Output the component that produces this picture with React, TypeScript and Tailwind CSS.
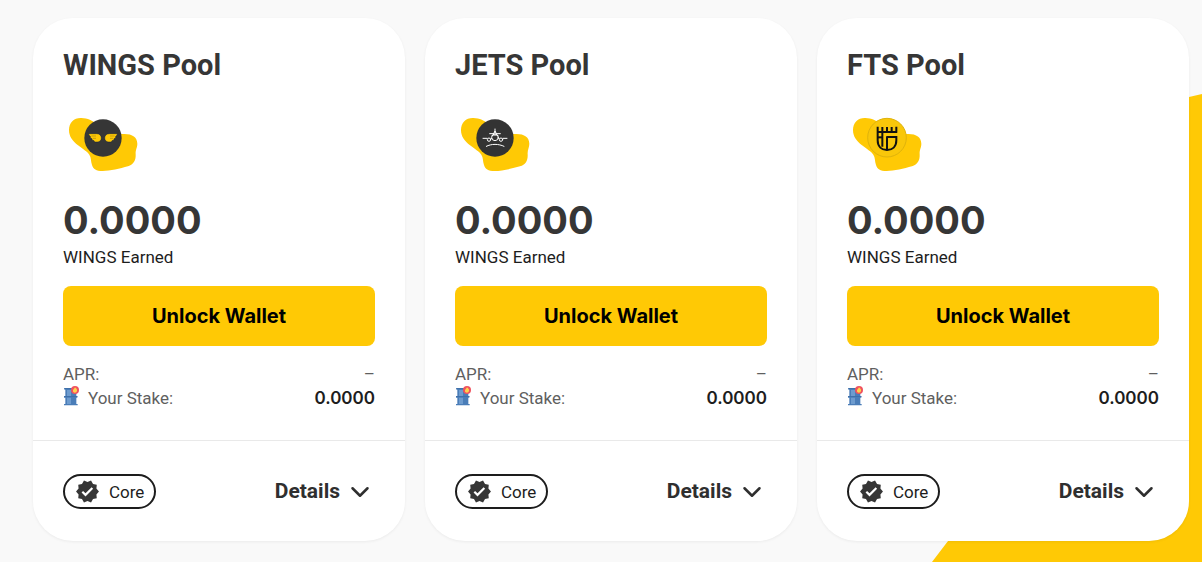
import type { ReactNode } from "react";
import { ChevronDown } from "lucide-react";
import { MdVerified } from "react-icons/md";

type Pool = {
  name: string;
  earned: string;
  stake: string;
  logo: ReactNode;
};

function WingsLogo() {
  return (
    <>
      <circle cx="129" cy="99" r="56" fill="#363636" />
      <g fill="#ffc905" stroke="#13213c" strokeWidth="1.5" strokeLinejoin="round">
        <path d="M86 86 H110 C119 86 124 92 124 99 C124 107 118 111 112 111 H104 L102 107 L96 105 V101 L91 99 V94 L87 91 Z" />
        <path d="M172 86 H148 C139 86 134 92 134 99 C134 107 140 111 146 111 H154 L156 107 L162 105 V101 L167 99 V94 L171 91 Z" />
      </g>
      <path d="M94 93 H108 M99 100 H108 M164 93 H150 M159 100 H150" stroke="#5a4d14" strokeWidth="1" fill="none" />
    </>
  );
}

function JetsLogo() {
  return (
    <>
      <circle cx="129" cy="99" r="56" fill="#333333" />
      <g fill="none" stroke="#ffffff" strokeWidth="3" strokeLinecap="round">
        <circle cx="129" cy="97" r="10" />
        <path d="M120 92 C124 89 134 89 138 92" />
        <path d="M129 72 V86 M113 86 H125 M133 86 H145 M125 86 L129 78 L133 86" />
        <path d="M93 100 H105 M117 100 H119 M139 100 H141 M153 100 H165" />
        <circle cx="111" cy="104" r="5" />
        <circle cx="147" cy="104" r="5" />
        <path d="M103 124 C118 116 140 116 156 124" />
      </g>
    </>
  );
}

function FtsLogo() {
  return (
    <>
      <circle cx="129" cy="98" r="58" fill="#f9c70a" stroke="#dfb30c" strokeWidth="3" />
      <g fill="none" stroke="#111111" strokeWidth="6">
        <path d="M101 65 V106 C101 125 113 135 129 135 C145 135 157 125 157 106 V96 H129" />
        <path d="M99 81 H159 M115 66 V125 M129 66 V80 M129 94 V135 M143 66 V80 M157 65 V83" />
        <path d="M101 97 H115" />
      </g>
    </>
  );
}

function PoolLogo({ children }: { children: ReactNode }) {
  return (
    <svg viewBox="9 21 240 192" className="h-16 w-20" aria-hidden="true">
      <path
        fill="#ffc905"
        d="M27 75 C27 52 43 38 64 39 C84 40 96 46 112 58 C135 76 160 88 190 87 C216 86 232 96 232 116 C232 128 226 134 227 148 C228 166 221 179 204 184 C180 191 150 198 128 198 C108 198 100 192 96 180 C92 168 94 158 88 149 C82 140 68 132 54 121 C38 108 27 95 27 75 Z"
      />
      {children}
    </svg>
  );
}

function BarrelIcon() {
  return (
    <svg viewBox="0 0 48 60" className="h-5 w-4" aria-hidden="true">
      <path fill="#4a7db8" d="M4 6 H42 V11 H40 V30 H43 V35 H40 V54 H44 V58 H3 V54 H7 V35 H3 V30 H7 V11 H4 Z" />
      <path fill="#6d9bce" d="M12 12 H24 V30 H12 Z M12 35 H24 V54 H12 Z" />
      <path fill="#3f70aa" d="M3 30 H43 V33 H3 Z M4 6 H34 V9 H4 Z" />
      <circle cx="36" cy="12" r="12" fill="#f0525f" />
      <path fill="#ffd34d" d="M36 4 C41 8 43 11 42 15 C41 19 38 20 36 20 C32 20 29 17 30 13 C31 9 35 8 36 4 Z" />
    </svg>
  );
}

const pools: Pool[] = [
  { name: "WINGS Pool", earned: "0.0000", stake: "0.0000", logo: <WingsLogo /> },
  { name: "JETS Pool", earned: "0.0000", stake: "0.0000", logo: <JetsLogo /> },
  { name: "FTS Pool", earned: "0.0000", stake: "0.0000", logo: <FtsLogo /> },
];

function PoolCard({ pool }: { pool: Pool }) {
  return (
    <article className="rounded-[40px] bg-white text-[#1d1d1d] shadow-[0_1px_3px_rgba(0,0,0,0.06)]">
      <div className="px-[30px] pt-[30px] pb-[30px]">
        <h2 className="text-[29px] leading-[34px] font-bold text-[#363636]">{pool.name}</h2>
        <div className="mt-[30px]">
          <PoolLogo>{pool.logo}</PoolLogo>
        </div>
        <p className="mt-6 font-['Inter',sans-serif] text-[38px] leading-10 font-bold text-[#363636]">{pool.earned}</p>
        <p className="mt-[5px] text-[17px] leading-6">WINGS Earned</p>
        <button type="button" className="mt-[17px] h-[60px] w-full rounded-lg bg-[#ffc905] font-['Inter',sans-serif] text-[20px] font-bold text-black">
          Unlock Wallet
        </button>
        <dl className="mt-4 text-[17px] leading-6 text-[#5f5f5f]">
          <div className="flex justify-between">
            <dt>APR:</dt>
            <dd>–</dd>
          </div>
          <div className="flex justify-between">
            <dt className="flex gap-[9px]">
              <BarrelIcon />
              Your Stake:
            </dt>
            <dd className="font-['Inter',sans-serif] font-semibold text-[#1d1d1d]">{pool.stake}</dd>
          </div>
        </dl>
      </div>
      <div className="flex items-center justify-between border-t border-[#e9e9e9] px-[30px] pt-[33px] pb-8">
        <span className="flex h-[35px] items-center gap-[9px] rounded-full border-2 border-[#1d1d1d] px-[10px] text-[17px] leading-6">
          <MdVerified size={25} color="#363636" aria-hidden="true" />
          Core
        </span>
        <button type="button" className="flex items-center gap-[5px] text-[21px] font-bold text-[#2f2f2f]">
          Details
          <ChevronDown size={30} aria-hidden="true" />
        </button>
      </div>
    </article>
  );
}

export default function App() {
  return (
    <main className="relative isolate min-h-screen overflow-hidden bg-[#f9f9f9] pt-[18px] pr-[13px] pb-[21px] pl-[33px] font-['Roboto',sans-serif]">
      <svg viewBox="0 0 272 470" className="absolute right-0 bottom-0 -z-10 h-[470px] w-[272px]" aria-hidden="true">
        <path fill="#ffc905" d="M2 470 L60 394 C90 350 120 100 180 30 C200 12 240 7 259 5 L272 2 V470 Z" />
      </svg>
      <div className="grid grid-cols-3 gap-5">
        {pools.map((pool) => (
          <PoolCard key={pool.name} pool={pool} />
        ))}
      </div>
    </main>
  );
}
